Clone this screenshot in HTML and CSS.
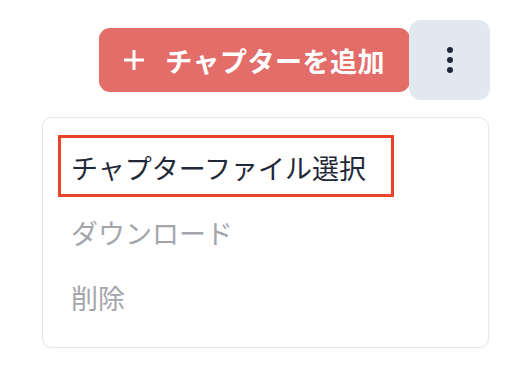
FILE: index.html
```html
<!DOCTYPE html>
<html lang="ja">
<head>
    <meta charset="UTF-8">
    <meta name="viewport" content="width=device-width, initial-scale=1.0">
    <title>チャプター</title>
    <link rel="stylesheet" href="styles.css">
</head>
<body>

    <div class="toolbar">
        <button class="add-button">
            <svg class="plus-icon" width="22" height="22" viewBox="0 0 22 22">
                <path d="M11 1 V21 M1 11 H21" stroke="#fff" stroke-width="3" fill="none"/>
            </svg>
            <span class="add-label">チャプターを追加</span>
        </button>
        <button class="more-button" aria-label="その他">
            <svg width="6" height="26" viewBox="0 0 6 26">
                <circle cx="3" cy="3" r="3" fill="#1f2937"/>
                <circle cx="3" cy="13" r="3" fill="#1f2937"/>
                <circle cx="3" cy="23" r="3" fill="#1f2937"/>
            </svg>
        </button>
    </div>

    <!-- Dropdown menu under the more button -->
    <div class="menu">
        <div class="menu-item active">チャプターファイル選択</div>
        <div class="menu-item disabled">ダウンロード</div>
        <div class="menu-item disabled">削除</div>
        <div class="highlight"></div>
    </div>

</body>
</html>
```

FILE: styles.css
```css
body {
    margin: 0;
    padding: 0;
    background-color: #fff;
    font-family: "Noto Sans CJK JP", "Noto Sans", sans-serif;
}

.toolbar {
    display: flex;
    justify-content: flex-end;
    align-items: center;
    padding: 20px 30px 0 0;
}

.add-button {
    display: flex;
    align-items: center;
    gap: 20px;
    height: 64px;
    padding: 0 25px 0 24px;
    margin-right: -1px;
    border: none;
    border-radius: 11px;
    background-color: #e36d69;
    color: #fff;
    font-family: inherit;
    font-size: 27px;
    font-weight: bold;
    cursor: pointer;
}

.add-label {
    letter-spacing: 0.5px;
}

.plus-icon {
    display: block;
}

.more-button {
    display: flex;
    align-items: center;
    justify-content: center;
    width: 81px;
    height: 80px;
    border: none;
    border-radius: 12px;
    background-color: #e2e8f0;
    cursor: pointer;
}

.menu {
    position: relative;
    margin: 17px 31px 0 42px;
    padding: 17px 0;
    border: 1px solid #e2e8f0;
    border-radius: 10px;
    background-color: #fff;
    box-shadow: 0 1px 2px rgba(0, 0, 0, 0.05);
}

.menu-item {
    padding: 0 28px;
    height: 65px;
    line-height: 65px;
    font-size: 27px;
    color: #1f2937;
}

.menu-item.disabled {
    color: #a3a5ab;
}

/* red marker drawn over the selected item */
.highlight {
    position: absolute;
    left: 15px;
    top: 17px;
    width: 330px;
    height: 56px;
    border: 3px solid #e8432b;
}
```
